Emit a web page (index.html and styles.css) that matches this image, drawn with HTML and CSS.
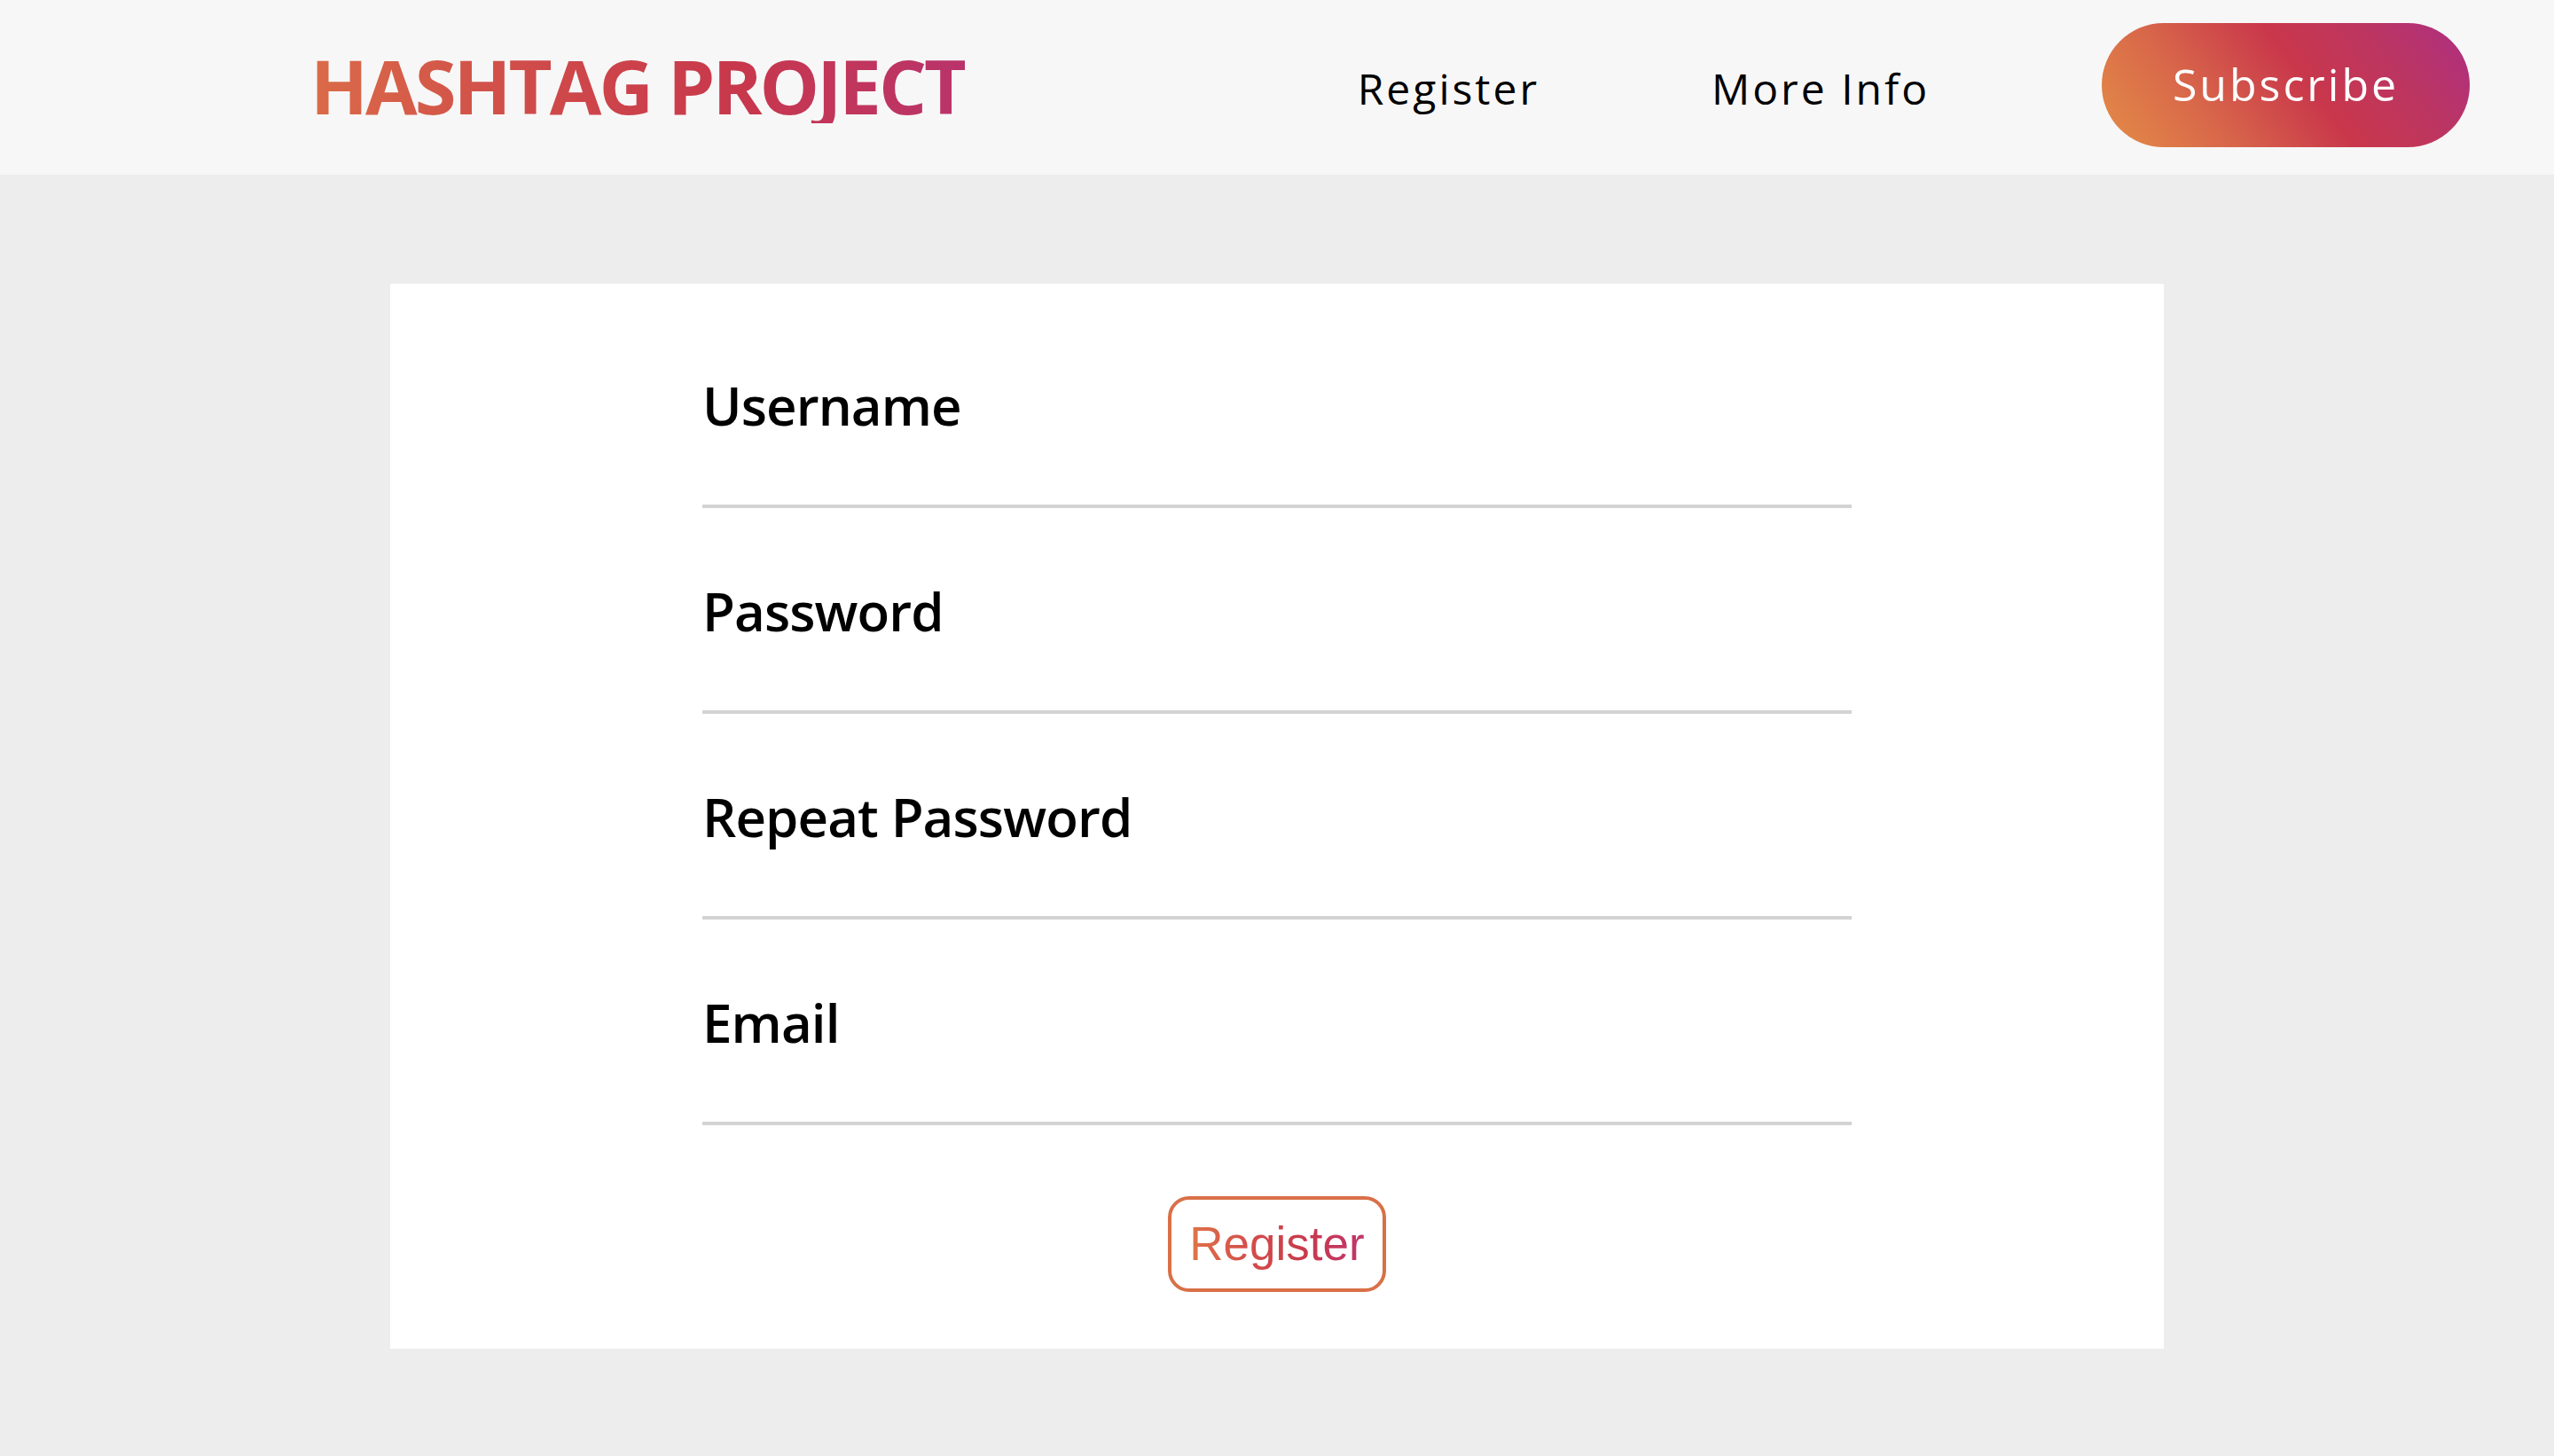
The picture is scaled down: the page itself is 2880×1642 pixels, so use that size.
FILE: index.html
```html
<!DOCTYPE html>
<html lang="en">
<head>
<meta charset="utf-8">
<title>Hashtag Project – Register</title>
<link rel="stylesheet" href="styles.css">
</head>
<body>
<header class="topbar">
  <div class="logo">HASHTAG PROJECT</div>
  <nav class="nav">
    <a class="nav-link" href="#">Register</a>
    <a class="nav-link" href="#">More Info</a>
    <a class="subscribe" href="#">Subscribe</a>
  </nav>
</header>
<main class="page">
  <form class="card">
    <div class="fields">
      <label class="field">
        <span class="field-label">Username</span>
        <input class="field-input" type="text">
      </label>
      <label class="field">
        <span class="field-label">Password</span>
        <input class="field-input" type="password">
      </label>
      <label class="field">
        <span class="field-label">Repeat Password</span>
        <input class="field-input" type="password">
      </label>
      <label class="field">
        <span class="field-label">Email</span>
        <input class="field-input" type="email">
      </label>
    </div>
    <button class="register-btn" type="button"><span class="register-text">Register</span></button>
  </form>
</main>
</body>
</html>
```
FILE: styles.css
```css
* { box-sizing: border-box; }

body {
  margin: 0;
  background: #ededed;
  font-family: "Open Sans", "Liberation Sans", sans-serif;
  color: #000;
}

.topbar {
  height: 197px;
  background: #f7f7f7;
  display: flex;
  align-items: center;
  padding: 0 95px 0 350px;
}

.logo {
  font-family: "Open Sans", sans-serif;
  font-weight: 700;
  font-size: 85px;
  line-height: 1;
  letter-spacing: -3px;
  margin-top: -4px;
  background: linear-gradient(90deg, #da6b48 0%, #cf4a4a 35%, #c8384c 65%, #b9336b 100%);
  -webkit-background-clip: text;
  background-clip: text;
  color: transparent;
}

.nav {
  margin-left: auto;
  display: flex;
  align-items: center;
  gap: 194px;
}

.nav-link {
  font-size: 48px;
  font-weight: 400;
  letter-spacing: 3px;
  color: #000;
  text-decoration: none;
  margin-top: 1px;
}

.subscribe {
  display: flex;
  align-items: center;
  justify-content: center;
  width: 415px;
  height: 140px;
  margin-top: -5px;
  border-radius: 70px;
  background: linear-gradient(53deg, #e48d47 0%, #d8674a 28%, #c9374b 55%, #bb3563 78%, #ad2f83 100%);
  color: #fff;
  font-size: 50px;
  letter-spacing: 3px;
  text-decoration: none;
  padding-bottom: 2px;
}

.page {
  padding-top: 123px;
}

.card {
  width: 2000px;
  margin: 0 auto;
  background: #fff;
  padding: 96px 352px 64px;
  display: flex;
  flex-direction: column;
  align-items: center;
}

.fields {
  width: 100%;
  display: flex;
  flex-direction: column;
  gap: 75px;
}

.field {
  display: flex;
  flex-direction: column;
}

.field-label {
  font-size: 60px;
  font-weight: 600;
  line-height: 82px;
  letter-spacing: -0.9px;
}

.field-input {
  display: block;
  width: 100%;
  height: 75px;
  border: none;
  border-bottom: 4px solid #d3d3d3;
  background: transparent;
  outline: none;
  font: inherit;
}

.register-btn {
  margin-top: 80px;
  width: 246px;
  height: 108px;
  border: 4px solid #d97048;
  border-radius: 24px;
  background: #fff;
  padding: 0;
  display: flex;
  align-items: center;
  justify-content: center;
}

.register-text {
  font-family: "Liberation Sans", Arial, sans-serif;
  font-size: 53px;
  line-height: 1.15;
  background: linear-gradient(90deg, #de7548 0%, #d44c4a 35%, #c93a4c 65%, #c0366c 100%);
  -webkit-background-clip: text;
  background-clip: text;
  color: transparent;
}
```
